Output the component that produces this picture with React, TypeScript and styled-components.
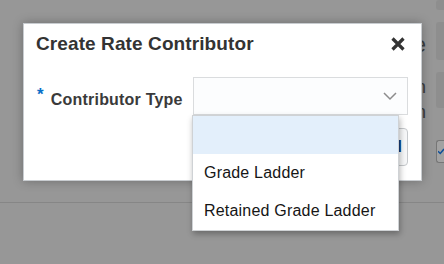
import React from "react";
import styled, { createGlobalStyle } from "styled-components";

const Global = createGlobalStyle`
  html, body { margin: 0; padding: 0; }
  body { font-family: "Liberation Sans", Arial, sans-serif; }
`;

const Page = styled.div`
  position: relative;
  width: 444px;
  height: 264px;
  overflow: hidden;
  background: #979797;
  display: flex;
  flex-direction: column;
`;

const BackdropTop = styled.div`
  height: 202px;
  display: flex;
  justify-content: flex-end;
`;

const FragmentCol = styled.div`
  width: 22px;
  padding: 34px 10px 0 0;
  box-sizing: border-box;
  display: flex;
  flex-direction: column;
  align-items: flex-end;
  color: #3d3d3d;
`;

const Fragment = styled.div<{ $size: number; $mt: number }>`
  font-size: ${(p) => p.$size}px;
  line-height: ${(p) => p.$size}px;
  margin-top: ${(p) => p.$mt}px;
`;

const BlockCol = styled.div`
  width: 8px;
  display: flex;
  flex-direction: column;
`;

const Block = styled.div<{ $h: number; $mt: number }>`
  height: ${(p) => p.$h}px;
  margin-top: ${(p) => p.$mt}px;
  background: #8e8e8e;
  border-radius: 3px 0 0 3px;
`;

const CheckBox = styled.div`
  margin-top: 32px;
  height: 23px;
  box-sizing: border-box;
  border: 1px solid #767676;
  border-right: none;
  border-radius: 3px 0 0 3px;
  background: #a2a2a2;
  display: flex;
  align-items: center;
  padding-left: 1px;
`;

const Rule = styled.div`
  height: 1px;
  background: #868686;
`;

const Dialog = styled.div`
  position: absolute;
  left: 23px;
  top: 23px;
  width: 399px;
  height: 158px;
  box-sizing: border-box;
  background: #ffffff;
  border: 1px solid #c8ccd0;
  box-shadow: 0 0 10px rgba(0, 0, 0, 0.28);
  display: flex;
  flex-direction: column;
`;

const Header = styled.div`
  display: flex;
  align-items: center;
  justify-content: space-between;
  padding: 9px 16px 0 12px;
`;

const Title = styled.h1`
  margin: 0;
  font-size: 19px;
  line-height: 22px;
  font-weight: 700;
  color: #333333;
  letter-spacing: 0.1px;
`;

const CloseButton = styled.button`
  border: none;
  background: none;
  padding: 0;
  width: 14px;
  height: 14px;
  display: flex;
  cursor: pointer;
`;

const FieldRow = styled.div`
  display: flex;
  align-items: center;
  margin-top: 22px;
  padding-left: 13px;
`;

const Label = styled.label`
  width: 156px;
  flex: none;
  font-size: 16px;
  font-weight: 700;
  color: #3a3a3a;
  padding-top: 2px;
  white-space: nowrap;
  letter-spacing: 0.2px;
`;

const Req = styled.span`
  color: #0a6fc8;
  margin-right: 7px;
  vertical-align: 5px;
  font-size: 17px;
`;

const SelectBox = styled.div`
  width: 215px;
  height: 38px;
  box-sizing: border-box;
  border: 1px solid #dadcde;
  background: #fcfdfe;
  display: flex;
  align-items: center;
  justify-content: flex-end;
  padding-right: 10px;
`;

const Footer = styled.div`
  display: flex;
  justify-content: flex-end;
  margin-top: 13px;
  padding-right: 13px;
`;

const Button = styled.button`
  height: 38px;
  box-sizing: border-box;
  border: 1px solid #c6c9cc;
  border-radius: 4px;
  background: #f7f8f9;
  color: #0b3d78;
  font-family: "Liberation Sans", Arial, sans-serif;
  font-size: 16px;
  font-weight: 700;
  padding: 0 5px 0 12px;
`;

const Menu = styled.ul`
  position: absolute;
  left: 192px;
  top: 115px;
  width: 207px;
  margin: 0;
  padding: 0;
  list-style: none;
  box-sizing: border-box;
  background: #ffffff;
  border: 1px solid #cfd2d5;
  box-shadow: 1px 3px 6px rgba(0, 0, 0, 0.3);
`;

const MenuItem = styled.li<{ $active?: boolean }>`
  height: 38px;
  display: flex;
  align-items: center;
  padding-left: 11px;
  font-size: 16px;
  letter-spacing: 0.2px;
  color: #161616;
  background: ${(p) => (p.$active ? "#e3effb" : "#ffffff")};
`;

export default function App() {
  return (
    <>
      <Global />
      <Page>
        <BackdropTop>
          <FragmentCol>
            <Fragment $size={22} $mt={0}>e</Fragment>
            <Fragment $size={19} $mt={21}>n</Fragment>
            <Fragment $size={19} $mt={6}>n</Fragment>
          </FragmentCol>
          <BlockCol>
            <Block $h={10} $mt={0} />
            <Block $h={38} $mt={12} />
            <Block $h={36} $mt={12} />
            <CheckBox>
              <svg width="8" height="10" viewBox="0 0 8 10">
                <polyline points="0,4 3,7 8,1" fill="none" stroke="#0e4f9a" strokeWidth="2" />
              </svg>
            </CheckBox>
          </BlockCol>
        </BackdropTop>
        <Rule />

        <Dialog role="dialog">
          <Header>
            <Title>Create Rate Contributor</Title>
            <CloseButton aria-label="Close">
              <svg width="14" height="14" viewBox="0 0 14 14">
                <path d="M1.5 1.5 L12.5 12.5 M12.5 1.5 L1.5 12.5" stroke="#333333" strokeWidth="3.2" fill="none" />
              </svg>
            </CloseButton>
          </Header>
          <FieldRow>
            <Label>
              <Req>*</Req>Contributor Type
            </Label>
            <SelectBox>
              <svg width="14" height="9" viewBox="0 0 14 9">
                <polyline points="1,1 7,7 13,1" fill="none" stroke="#8c8c8c" strokeWidth="1.5" />
              </svg>
            </SelectBox>
          </FieldRow>
          <Footer>
            <Button>Cancel</Button>
          </Footer>
        </Dialog>

        <Menu role="listbox">
          <MenuItem $active />
          <MenuItem>Grade Ladder</MenuItem>
          <MenuItem>Retained Grade Ladder</MenuItem>
        </Menu>
      </Page>
    </>
  );
}
